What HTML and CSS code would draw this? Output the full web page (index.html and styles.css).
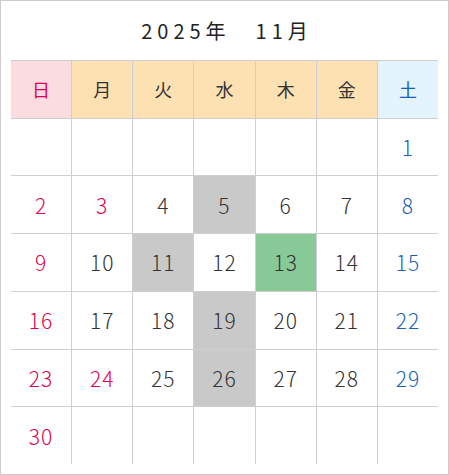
FILE: index.html
```html
<!DOCTYPE html>
<html lang="ja">
<head>
<meta charset="utf-8">
<link rel="stylesheet" href="styles.css">
</head>
<body>
<div class="cal">
  <div class="title">2025年　11月</div>
  <div class="grid">
    <div class="h sun">日</div>
    <div class="h wd">月</div>
    <div class="h wd">火</div>
    <div class="h wd">水</div>
    <div class="h wd">木</div>
    <div class="h wd">金</div>
    <div class="h sat">土</div>

    <div class="c"></div><div class="c"></div><div class="c"></div><div class="c"></div><div class="c"></div><div class="c"></div><div class="c blue">1</div>

    <div class="c red">2</div><div class="c red">3</div><div class="c">4</div><div class="c gray">5</div><div class="c">6</div><div class="c">7</div><div class="c blue">8</div>

    <div class="c red">9</div><div class="c">10</div><div class="c gray">11</div><div class="c">12</div><div class="c green">13</div><div class="c">14</div><div class="c blue">15</div>

    <div class="c red">16</div><div class="c">17</div><div class="c">18</div><div class="c gray">19</div><div class="c">20</div><div class="c">21</div><div class="c blue">22</div>

    <div class="c red">23</div><div class="c red">24</div><div class="c">25</div><div class="c gray">26</div><div class="c">27</div><div class="c">28</div><div class="c blue">29</div>

    <div class="c red">30</div><div class="c"></div><div class="c"></div><div class="c"></div><div class="c"></div><div class="c"></div><div class="c"></div>
  </div>
</div>
</body>
</html>
```
FILE: styles.css
```css
html, body {
  margin: 0;
  padding: 0;
  background: #fff;
}
body {
  font-family: "Noto Sans CJK JP", "Noto Sans", sans-serif;
  color: #333;
}
.cal {
  width: 449px;
  height: 475px;
  box-sizing: border-box;
  border: 1px solid #cccccc;
  padding: 0 10px 10px;
  display: flex;
  flex-direction: column;
}
.title {
  height: 59px;
  line-height: 59px;
  text-align: center;
  font-size: 20px;
  letter-spacing: 5px;
  padding-left: 5px;
  color: #222;
}
.grid {
  flex: 1;
  display: grid;
  grid-template-columns: repeat(7, 1fr);
  grid-template-rows: repeat(7, 1fr);
  gap: 1px;
  background: #cfcfcf;
  padding-top: 1px;
}
.h, .c {
  background: #fff;
  display: flex;
  align-items: center;
  justify-content: center;
  font-size: 21px;
  font-weight: 300;
  letter-spacing: 1px;
}
.h {
  font-size: 18px;
  font-weight: 400;
  letter-spacing: 0;
}
.sun { background: #fbdde1; color: #e2004f; }
.wd { background: #fee1b3; color: #333; }
.sat { background: #e3f4fd; color: #1a62b0; }
.red { color: #e2004f; }
.blue { color: #1a62b0; }
.gray { background: #c9c9c9; }
.green { background: #88c998; }
```
